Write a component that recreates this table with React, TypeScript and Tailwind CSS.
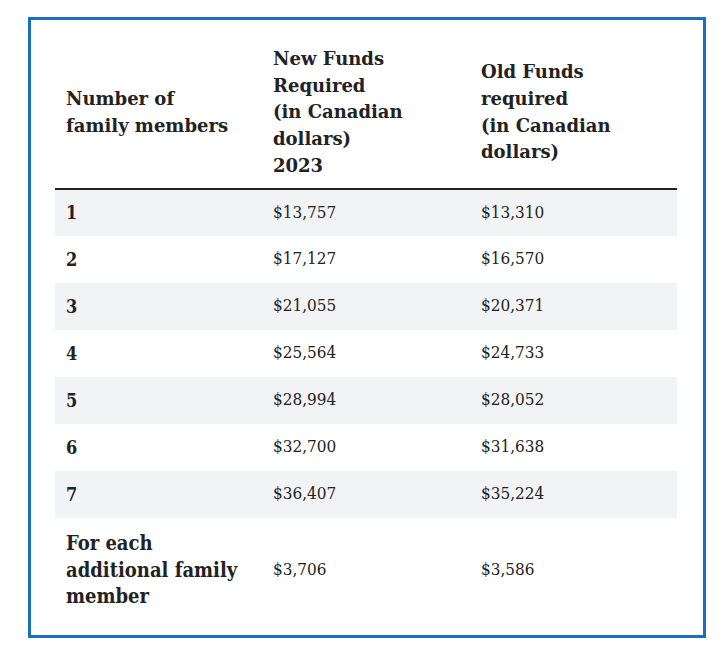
const rows: [string, string, string][] = [
  ['1', '$13,757', '$13,310'],
  ['2', '$17,127', '$16,570'],
  ['3', '$21,055', '$20,371'],
  ['4', '$25,564', '$24,733'],
  ['5', '$28,994', '$28,052'],
  ['6', '$32,700', '$31,638'],
  ['7', '$36,407', '$35,224'],
];

export default function App() {
  return (
    <div className="w-[721px] h-[645px] bg-white pt-[17px] pl-[28px] font-['DejaVu_Serif',serif] text-[#222]">
      <div className="w-[678px] h-[621px] border-[3px] border-[#1a6fc0] pt-[26px] pl-[24px]">
        <table className="w-[622px] border-collapse table-fixed">
          <thead>
            <tr className="border-b-[2px] border-[#222] text-left align-middle text-[18px] leading-[26.7px] font-bold">
              <th className="w-[207px] pl-[11px] pb-[8px]">
                Number of
                <br />
                family members
              </th>
              <th className="w-[208px] pl-[11px] pb-[8px]">
                New Funds
                <br />
                Required
                <br />
                (in Canadian
                <br />
                dollars)
                <br />
                2023
              </th>
              <th className="pl-[11px] pb-[8px]">
                Old Funds
                <br />
                required
                <br />
                (in Canadian
                <br />
                dollars)
              </th>
            </tr>
          </thead>
          <tbody className="text-[17px] font-['DejaVu_Serif_Condensed','DejaVu_Serif',serif] [font-stretch:condensed]">
            {rows.map((r, i) => (
              <tr key={r[0]} className={i % 2 === 0 ? 'bg-[#f2f3f5] h-[47px]' : 'bg-white h-[47px]'}>
                <td className="pl-[11px] font-bold text-[18px]">{r[0]}</td>
                <td className="pl-[11px]">{r[1]}</td>
                <td className="pl-[11px]">{r[2]}</td>
              </tr>
            ))}
            <tr className="h-[105px]">
              <td className="pl-[11px] font-bold text-[20px] leading-[26.7px]">
                For each
                <br />
                additional family
                <br />
                member
              </td>
              <td className="pl-[11px]">$3,706</td>
              <td className="pl-[11px]">$3,586</td>
            </tr>
          </tbody>
        </table>
      </div>
    </div>
  );
}
